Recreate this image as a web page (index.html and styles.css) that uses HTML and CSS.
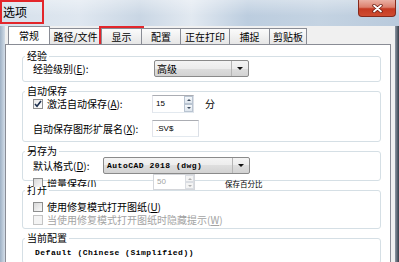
FILE: index.html
```html
<!DOCTYPE html>
<html lang="zh-CN">
  <head>
    <meta charset="UTF-8" />
    <meta name="viewport" content="width=device-width, initial-scale=1.0" />
    <title>选项</title>
    <link rel="stylesheet" href="styles.css">
  </head>
  <body>
    <div class="titlebar">
      <div class="title">选项</div>
      <div class="close-btn">
        <svg width="11" height="9" viewBox="0 0 11 9">
          <path d="M2 1.5 L9 7.5 M9 1.5 L2 7.5" stroke="#6b1b10" stroke-width="3.4" stroke-linecap="round" />
          <path d="M2 1.5 L9 7.5 M9 1.5 L2 7.5" stroke="#fff" stroke-width="1.8" stroke-linecap="round" />
        </svg>
      </div>
    </div>

    <div class="frame">
      <div class="frame-left"></div>
      <div class="client">
        <div class="tabs">
          <div class="tab tab-active w42">常规</div>
          <div class="tab w53">路径/文件</div>
          <div class="tab w41 marked">显示</div>
          <div class="tab w40">配置</div>
          <div class="tab w50">正在打印</div>
          <div class="tab w41">捕捉</div>
          <div class="tab w38">剪贴板</div>
        </div>

        <div class="panel">
          <fieldset class="group pb4">
            <legend>经验</legend>
            <div class="row">
              <span class="label w121">经验级别(<u>E</u>):</span>
              <div class="select w95">
                <span class="select-value">高级</span>
                <span class="select-arrow"></span>
              </div>
            </div>
          </fieldset>

          <fieldset class="group pb4">
            <legend>自动保存</legend>
            <div class="row h18">
              <span class="check checked">
                <svg width="8" height="8" viewBox="0 0 8 8">
                  <path d="M1 4 L3 6.3 L7 1" fill="none" stroke="#1c2f4e" stroke-width="1.6" />
                </svg>
              </span>
              <span class="label w105">激活自动保存(<u>A</u>):</span>
              <div class="spin">
                <span class="spin-value">15</span>
                <span class="spin-buttons"><span class="up"></span><span class="down"></span></span>
              </div>
              <span class="unit">分</span>
            </div>
            <div class="row mt7">
              <span class="label w119">自动保存图形扩展名(<u>X</u>):</span>
              <div class="textbox">.SV$</div>
            </div>
          </fieldset>

          <fieldset class="group pb6">
            <legend>另存为</legend>
            <div class="row mt2">
              <span class="label w70">默认格式(<u>D</u>):</span>
              <div class="select w147">
                <span class="select-value mono">AutoCAD 2018 (dwg)</span>
                <span class="select-arrow"></span>
              </div>
            </div>
          </fieldset>

          <fieldset class="group pb2">
            <legend>打开</legend>
            <div class="row h13 mt6">
              <span class="check"></span>
              <span>使用修复模式打开图纸(<u>U</u>)</span>
            </div>
            <div class="row h13 disabled">
              <span class="check"></span>
              <span>当使用修复模式打开图纸时隐藏提示(<u>W</u>)</span>
            </div>
          </fieldset>

          <fieldset class="group pb4">
            <legend>当前配置</legend>
            <div class="row mt5 mono profile">Default (Chinese (Simplified))</div>
          </fieldset>

          <!-- leftover controls drawn over the groups in the original dialog -->
          <div class="ghost ghost-check">
            <span class="check"></span>
            <span>增量保存(<u>I</u>)</span>
          </div>
          <div class="ghost ghost-spin spin disabled">
            <span class="spin-value">50</span>
            <span class="spin-buttons"><span class="up"></span><span class="down"></span></span>
          </div>
          <div class="ghost ghost-text">保存百分比</div>
        </div>
      </div>
      <div class="frame-right"></div>
    </div>
  </body>
</html>
```

FILE: styles.css
```css
* {
  box-sizing: border-box;
}
html,
body {
  margin: 0;
  height: 262px;
  overflow: hidden;
}
body {
  width: 399px;
  font-family: "Noto Sans CJK SC", "Liberation Sans", sans-serif;
  font-size: 10px;
  color: #000;
  background: #c3d2e2;
}
u {
  text-decoration: underline;
}

/* title bar */
.titlebar {
  height: 26px;
  display: flex;
  align-items: flex-start;
  background:
    linear-gradient(180deg, rgba(255, 255, 255, 0.35), rgba(255, 255, 255, 0) 60%),
    linear-gradient(90deg, #d5e0eb 0%, #dfe7f0 20%, #c9d6e4 35%, #e2e9f1 48%, #bccddf 62%, #c4d3e2 80%, #b9cadc 100%);
}
.title {
  width: 44px;
  height: 24px;
  border: 2px solid #e3262b;
  padding-left: 1px;
  font-size: 12px;
  line-height: 20px;
}
.close-btn {
  margin-left: auto;
  margin-right: 3px;
  width: 38px;
  height: 17px;
  border: 1px solid #86291b;
  border-top: none;
  border-radius: 0 0 4px 4px;
  background: linear-gradient(180deg, #eab0a3 0%, #dc806d 45%, #c53a22 55%, #cf4c31 100%);
  display: flex;
  align-items: center;
  justify-content: center;
}

/* window frame */
.frame {
  display: flex;
  height: 236px;
}
.frame-left {
  width: 5px;
  background: linear-gradient(90deg, #9eb1c5, #d3dde8);
}
.frame-right {
  width: 4px;
  background: linear-gradient(90deg, #8d98a5, #353d48);
}
.client {
  flex: 1;
  display: flex;
  flex-direction: column;
  padding-right: 4px;
  background: #f0f0f0;
}

/* tabs */
.tabs {
  display: flex;
  align-items: flex-end;
  height: 20px;
  padding-left: 3px;
}
.tab {
  height: 16px;
  margin-left: -1px;
  border: 1px solid #898c95;
  border-bottom: none;
  background: linear-gradient(180deg, #fbfbfb, #e6e6e6);
  text-align: center;
  line-height: 15px;
}
.tab-active {
  position: relative;
  margin-left: 0;
  height: 19px;
  margin-bottom: -1px;
  background: #fff;
  line-height: 17px;
}
.marked {
  outline: 2px solid #e3262b;
  outline-offset: 0;
}
.w38 { width: 38px; }
.w40 { width: 40px; }
.w41 { width: 41px; }
.w42 { width: 42px; }
.w50 { width: 50px; }
.w53 { width: 53px; }

/* page panel */
.panel {
  position: relative;
  flex: 1;
  background: #fff;
  border: 1px solid #898c95;
  padding-top: 7px;
}
.group {
  margin: 0 9px 5px 16px;
  padding: 0 8px 4px 10px;
  border: 1px solid #d5dfe5;
  border-radius: 3px;
  min-width: 0;
}
.group legend {
  margin-left: -8px;
  padding: 0 2px;
  font-size: 10px;
  line-height: 8px;
}
.pb2 { padding-bottom: 2px; }
.pb4 { padding-bottom: 4px; }
.pb6 { padding-bottom: 6px; }

.row {
  display: flex;
  align-items: center;
  white-space: nowrap;
  line-height: 12px;
}
.h13 { height: 13px; }
.h18 { height: 18px; }
.mt2 { margin-top: 2px; }
.mt5 { margin-top: 5px; }
.mt6 { margin-top: 6px; }
.mt7 { margin-top: 7px; }
.w70 { width: 70px; }
.w105 { width: 105px; }
.w119 { width: 119px; }
.w121 { width: 121px; }
.w95 { width: 95px; }
.w147 { width: 147px; }

.label {
  flex: none;
}
.disabled {
  color: #a3a3a3;
}
.mono {
  font-family: "Liberation Mono", monospace;
  font-size: 8px;
  font-weight: bold;
  letter-spacing: 0.5px;
}
.profile {
  padding-left: 2px;
  height: 12px;
}

/* combo box */
.select {
  display: flex;
  height: 17px;
  border: 1px solid #8a8a8a;
  border-radius: 2px;
  background: linear-gradient(180deg, #f4f4f4 0%, #ececec 50%, #dedede 50%, #d2d2d2 100%);
}
.select-value {
  flex: 1;
  padding-left: 2px;
  line-height: 15px;
  overflow: hidden;
}
.select-value.mono {
  padding-left: 3px;
}
.select-arrow {
  width: 17px;
  border-left: 1px solid #b5b5b5;
  display: flex;
  align-items: center;
  justify-content: center;
}
.select-arrow::after {
  content: "";
  border-left: 3px solid transparent;
  border-right: 3px solid transparent;
  border-top: 3px solid #111;
}

/* check box */
.check {
  flex: none;
  width: 10px;
  height: 10px;
  margin-right: 4px;
  border: 1px solid #8e8f8f;
  background: linear-gradient(135deg, #d8d8d8, #fafafa);
  display: flex;
  align-items: center;
  justify-content: center;
}
.check.checked {
  background: linear-gradient(135deg, #e9e9e9, #fff);
}
.disabled .check {
  border-color: #c4c4c4;
  background: #f4f4f4;
}

/* spin box and text box */
.spin {
  display: flex;
  width: 42px;
  height: 18px;
  border: 1px solid;
  border-color: #abadb3 #dbdfe6 #e3e9ef #e2e3ea;
  background: #fff;
}
.spin-value {
  flex: 1;
  padding-left: 3px;
  font-family: "Liberation Sans", sans-serif;
  font-size: 8px;
  line-height: 16px;
}
.spin-buttons {
  width: 9px;
  display: flex;
  flex-direction: column;
}
.spin-buttons span {
  flex: 1;
  border: 1px solid #b9c4d1;
  background: linear-gradient(180deg, #f5f8fb, #dfe6ee);
  display: flex;
  align-items: center;
  justify-content: center;
}
.spin-buttons .up::after {
  content: "";
  border-left: 2px solid transparent;
  border-right: 2px solid transparent;
  border-bottom: 2px solid #3c4a5c;
}
.spin-buttons .down::after {
  content: "";
  border-left: 2px solid transparent;
  border-right: 2px solid transparent;
  border-top: 2px solid #3c4a5c;
}
.spin.disabled {
  border-color: #d4d6da;
}
.spin.disabled .spin-buttons span {
  border-color: #dadde2;
  background: #f4f4f4;
}
.spin.disabled .spin-buttons span::after {
  border-top-color: #b0b0b0;
  border-bottom-color: #b0b0b0;
}
.unit {
  margin-left: 11px;
}
.textbox {
  width: 47px;
  height: 17px;
  border: 1px solid;
  border-color: #abadb3 #dbdfe6 #e3e9ef #e2e3ea;
  padding-left: 3px;
  font-family: "Liberation Sans", sans-serif;
  font-size: 8px;
  line-height: 15px;
}

/* stray controls lying over the groups */
.ghost {
  position: absolute;
}
.ghost-check {
  left: 27px;
  top: 133px;
  height: 9px;
  display: flex;
  align-items: flex-start;
  overflow: hidden;
  line-height: 12px;
}
.ghost-spin {
  left: 147px;
  top: 129px;
  height: 16px;
}
.ghost-spin .spin-value {
  color: #a3a3a3;
  line-height: 14px;
}
.ghost-text {
  left: 219px;
  top: 134px;
  font-size: 7.5px;
  line-height: 9px;
}
```
